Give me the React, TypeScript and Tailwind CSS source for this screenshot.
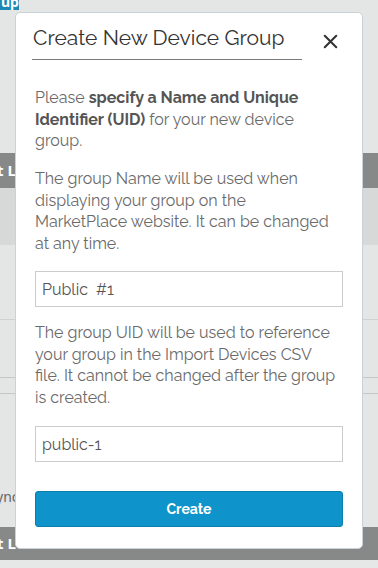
import { X } from "lucide-react";

const font = { fontFamily: '"Raleway", Lato, "Open Sans", sans-serif' };

function Backdrop() {
  return (
    <div className="flex h-[568px] w-[378px] flex-col bg-[#e4e5e5] text-white">
      <div className="flex h-[153px] items-start">
        <div className="h-[10px] w-[19px] overflow-hidden bg-[#1f87b5] pl-[1px] text-[14px] font-bold leading-[4px]">
          up
        </div>
      </div>
      <div className="flex h-[35px] items-center overflow-hidden bg-[#878888] text-[15px] font-bold">
        <span className="-ml-[3px]">t L</span>
      </div>
      <div className="h-[57px] bg-[#d7d8d8]" />
      <div className="h-[75px] border-b border-[#cfd0d0]" />
      <div className="h-[58px] border-b border-[#c4c5c5]" />
      <div className="h-[16px] border-b border-[#c4c5c5]" />
      <div className="flex h-[133px] items-end pb-[20px] text-[14px] text-[#666]">
        <span className="-ml-[4px]">ync</span>
      </div>
      <div className="flex h-[33px] items-center overflow-hidden bg-[#878888] text-[15px] font-bold">
        <span className="-ml-[3px]">t L</span>
      </div>
      <div className="flex-1 bg-[#e6e7e7]" />
    </div>
  );
}

function Modal() {
  return (
    <div
      className="absolute left-[15px] top-[12px] flex h-[537px] w-[348px] flex-col rounded-[5px] border border-[#c9d2d6] bg-white px-[19px] pt-[9px]"
      style={font}
    >
      <div className="flex items-start justify-between">
        <h2 className="-ml-[3px] w-[270px] border-b border-[#7a7a7a] pb-[5px] pl-[1px] text-[21px] leading-[32px] text-[#333]">
          Create New Device Group
        </h2>
        <button className="mr-[1px] mt-[8px] text-[#333]">
          <X className="h-[23px] w-[23px]" strokeWidth={2.2} />
        </button>
      </div>

      <div className="mt-[27px] text-[16px] leading-[21.5px] text-[#6a6a6a]">
        <p>
          Please{" "}
          <b className="font-bold text-[#555]">
            specify a Name and Unique
            <br />
            Identifier (UID)
          </b>{" "}
          for your new device
          <br />
          group.
        </p>
        <p className="mt-[16.5px]">
          The group Name will be used when
          <br />
          displaying your group on the
          <br />
          MarketPlace website. It can be changed
          <br />
          at any time.
        </p>
      </div>

      <input
        className="mt-[17px] h-[36px] w-full shrink-0 border border-[#cccccc] px-[6px] text-[16px] text-[#555] outline-none"
        defaultValue="Public  #1"
      />

      <p className="mt-[15px] text-[16px] leading-[21.5px] text-[#6a6a6a]">
        The group UID will be used to reference
        <br />
        your group in the Import Devices CSV
        <br />
        file. It cannot be changed after the group
        <br />
        is created.
      </p>

      <input
        className="mt-[18px] h-[36px] w-full shrink-0 border border-[#cccccc] px-[6px] text-[16px] text-[#555] outline-none"
        defaultValue="public-1"
      />

      <button className="mt-[29px] h-[36px] w-full shrink-0 rounded-[3px] border border-[#0a7eaf] bg-[#0e94cb] text-[14px] font-bold text-white">
        Create
      </button>
    </div>
  );
}

export default function App() {
  return (
    <div className="relative h-[568px] w-[378px] overflow-hidden">
      <Backdrop />
      <Modal />
    </div>
  );
}
